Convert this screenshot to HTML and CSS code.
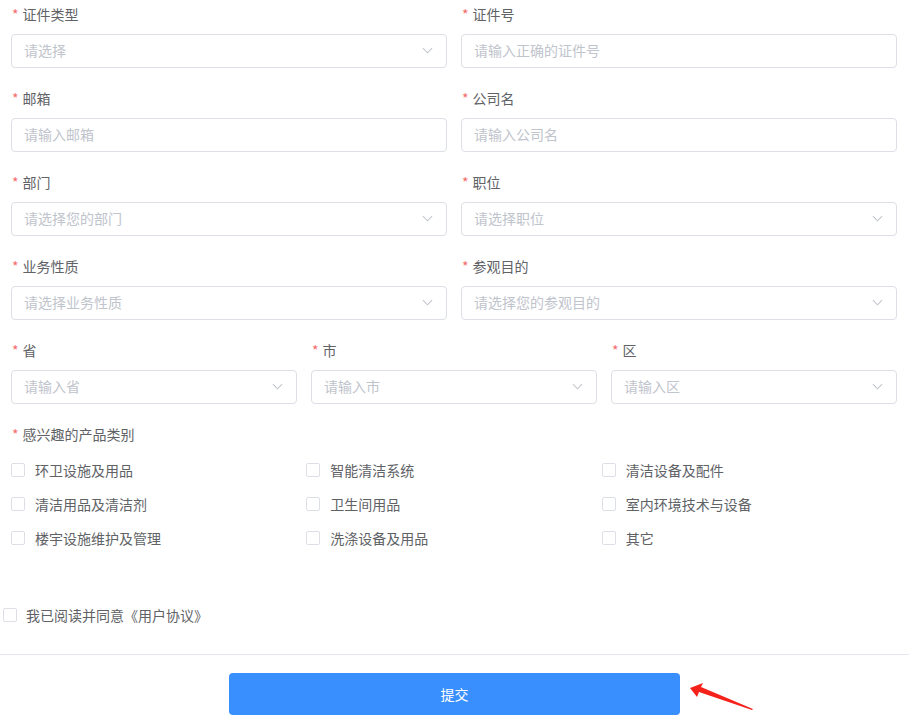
FILE: index.html
```html
<!DOCTYPE html>
<html lang="zh">
<head>
<meta charset="utf-8">
<title>表单</title>
<link rel="stylesheet" href="styles.css">
</head>
<body>
<div class="form">
  <div class="row row2">
    <div class="item"><div class="label">证件类型</div><div class="input"><span class="ph">请选择</span><svg class="chev" viewBox="0 0 12 7"><polyline points="1,1 6,6 11,1"/></svg></div></div>
    <div class="item"><div class="label">证件号</div><div class="input"><span class="ph">请输入正确的证件号</span></div></div>
  </div>
  <div class="row row2">
    <div class="item"><div class="label">邮箱</div><div class="input"><span class="ph">请输入邮箱</span></div></div>
    <div class="item"><div class="label">公司名</div><div class="input"><span class="ph">请输入公司名</span></div></div>
  </div>
  <div class="row row2">
    <div class="item"><div class="label">部门</div><div class="input"><span class="ph">请选择您的部门</span><svg class="chev" viewBox="0 0 12 7"><polyline points="1,1 6,6 11,1"/></svg></div></div>
    <div class="item"><div class="label">职位</div><div class="input"><span class="ph">请选择职位</span><svg class="chev" viewBox="0 0 12 7"><polyline points="1,1 6,6 11,1"/></svg></div></div>
  </div>
  <div class="row row2">
    <div class="item"><div class="label">业务性质</div><div class="input"><span class="ph">请选择业务性质</span><svg class="chev" viewBox="0 0 12 7"><polyline points="1,1 6,6 11,1"/></svg></div></div>
    <div class="item"><div class="label">参观目的</div><div class="input"><span class="ph">请选择您的参观目的</span><svg class="chev" viewBox="0 0 12 7"><polyline points="1,1 6,6 11,1"/></svg></div></div>
  </div>
  <div class="row row3">
    <div class="item"><div class="label">省</div><div class="input"><span class="ph">请输入省</span><svg class="chev" viewBox="0 0 12 7"><polyline points="1,1 6,6 11,1"/></svg></div></div>
    <div class="item"><div class="label">市</div><div class="input"><span class="ph">请输入市</span><svg class="chev" viewBox="0 0 12 7"><polyline points="1,1 6,6 11,1"/></svg></div></div>
    <div class="item"><div class="label">区</div><div class="input"><span class="ph">请输入区</span><svg class="chev" viewBox="0 0 12 7"><polyline points="1,1 6,6 11,1"/></svg></div></div>
  </div>
  <div class="label">感兴趣的产品类别</div>
  <div class="checks">
    <div class="check"><span class="box"></span>环卫设施及用品</div>
    <div class="check"><span class="box"></span>智能清洁系统</div>
    <div class="check"><span class="box"></span>清洁设备及配件</div>
    <div class="check"><span class="box"></span>清洁用品及清洁剂</div>
    <div class="check"><span class="box"></span>卫生间用品</div>
    <div class="check"><span class="box"></span>室内环境技术与设备</div>
    <div class="check"><span class="box"></span>楼宇设施维护及管理</div>
    <div class="check"><span class="box"></span>洗涤设备及用品</div>
    <div class="check"><span class="box"></span>其它</div>
  </div>
</div>
<div class="agree"><span class="box"></span>我已阅读并同意《用户协议》</div>
<div class="divider"></div>
<div class="footer">
  <button class="submit">提交</button>
  <svg class="arrow" viewBox="0 0 70 30"><polygon points="0,5 13,0 11,4 63,26 62,27 9,9 7,14"/></svg>
</div>
</body>
</html>
```
FILE: styles.css
```css
html, body {
  margin: 0;
  padding: 0;
  background: #fff;
}
body {
  font-family: "Noto Sans CJK SC", "Noto Sans", sans-serif;
  font-size: 14px;
  color: #606266;
}
.form {
  padding: 0 12px 0 11px;
}
.row {
  display: grid;
  column-gap: 14px;
}
.row2 { grid-template-columns: 1fr 1fr; }
.row3 { grid-template-columns: 1fr 1fr 1fr; }
.item {
  margin-bottom: 16px;
}
.label {
  line-height: 28px;
  height: 28px;
  margin-bottom: 6px;
  padding-left: 1px;
  color: #606266;
}
.label::before {
  content: "*";
  color: #f56c6c;
  margin-right: 4px;
}
.input {
  box-sizing: border-box;
  height: 34px;
  border: 1px solid #dcdfe6;
  border-radius: 4px;
  padding: 0 13px 2px 12px;
  display: flex;
  align-items: center;
  justify-content: space-between;
}
.ph {
  color: #c0c4cc;
}
.chev {
  width: 11px;
  height: 7px;
  fill: none;
  stroke: #c0c4cc;
  stroke-width: 1.1;
}
.checks {
  display: grid;
  grid-template-columns: 1fr 1fr 1fr;
}
.check {
  box-sizing: border-box;
  height: 34px;
  padding-bottom: 2px;
  display: flex;
  align-items: center;
}
.box {
  box-sizing: border-box;
  width: 14px;
  height: 14px;
  border: 1px solid #dcdfe6;
  border-radius: 2px;
  margin-right: 10px;
  flex: none;
}
.agree {
  margin-top: 49px;
  padding-left: 3px;
  height: 20px;
  display: flex;
  align-items: center;
}
.agree .box {
  margin-right: 9px;
}
.divider {
  margin-top: 29px;
  height: 1px;
  background: #e4e7ed;
}
.footer {
  position: relative;
  padding: 18px 0 0 229px;
}
.submit {
  width: 451px;
  height: 42px;
  border: none;
  border-radius: 4px;
  background: #3a8ffe;
  color: #fff;
  font-family: "Noto Sans CJK SC", "Noto Sans", sans-serif;
  font-size: 14px;
  cursor: pointer;
}
.arrow {
  position: absolute;
  left: 690px;
  top: 28px;
  width: 70px;
  height: 30px;
  fill: #f5221b;
}
```
